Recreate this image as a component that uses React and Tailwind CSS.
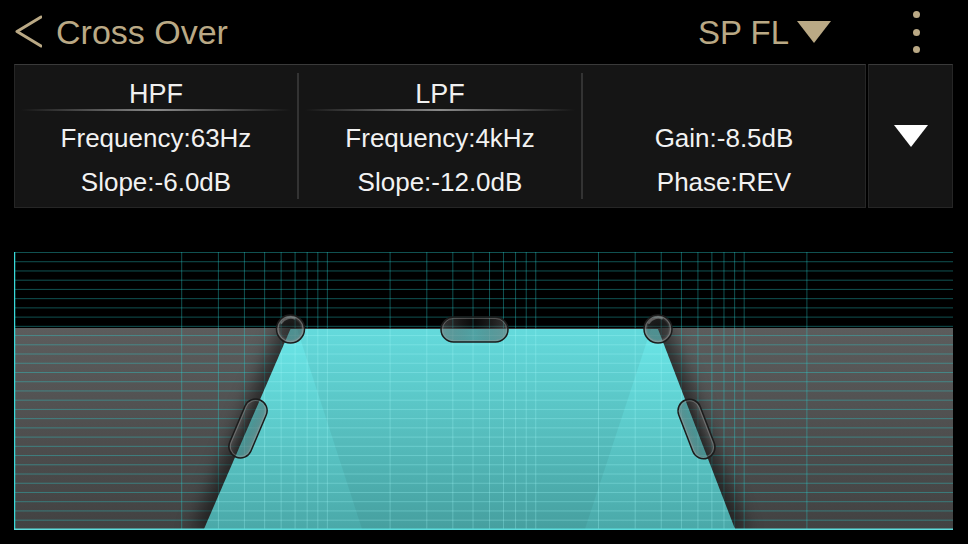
import React from "react";

const GOLD = "#baa985";

// log-frequency grid: x = 181.7 + 208.4 * log10(f / 20)
const freqs = [20, 30, 40, 50, 60, 70, 80, 90, 100, 200, 300, 400, 500, 600, 700, 800, 900,
  1000, 2000, 3000, 4000, 5000, 6000, 7000, 8000, 9000, 10000, 20000];
const xs = freqs.map((f) => 181.7 + 208.4 * Math.log10(f / 20));
const ys = Array.from({ length: 30 }, (_, i) => 252.5 + i * 9.23);

const trap = "290.5,329 658,329 735,529 204,529";

function Grid({ stroke, opacity }) {
  return (
    <g stroke={stroke} strokeOpacity={opacity} strokeWidth="1">
      {ys.map((y) => (<line key={"h" + y} x1="14" x2="953" y1={y} y2={y} />))}
      {xs.map((x) => (<line key={"v" + x} x1={x} x2={x} y1="252" y2="529" />))}
    </g>
  );
}

function Knob({ cx, cy }) {
  return (
    <g>
      <circle cx={cx} cy={cy} r="14" fill="url(#knob)" stroke="#1c1c1c" strokeWidth="1.5" />
      <circle cx={cx} cy={cy} r="12.5" fill="none" stroke="#a0a0a0" strokeOpacity="0.4" strokeWidth="1" />
      <path d={`M${cx - 9} ${cy - 6} A11 11 0 0 1 ${cx + 4} ${cy - 10.5}`} fill="none" stroke="#d8d8d8" strokeOpacity="0.3" strokeWidth="2" strokeLinecap="round" />
    </g>
  );
}

function Pill({ x, y, w, h, rot }) {
  return (
    <g transform={`translate(${x},${y}) rotate(${rot})`}>
      <rect x={-w / 2} y={-h / 2} width={w} height={h} rx={Math.min(w, h) / 2}
        fill="url(#pill)" stroke="#1c1c1c" strokeWidth="1.5" />
      <rect x={-w / 2 + 1.5} y={-h / 2 + 1.5} width={w - 3} height={h - 3} rx={Math.min(w, h) / 2 - 1.5}
        fill="none" stroke="#a0a0a0" strokeOpacity="0.4" strokeWidth="1" />
    </g>
  );
}

function Column({ title, line1, line2 }) {
  return (
    <div className="flex-1 flex flex-col">
      <div className="h-[44px] flex items-end justify-center pb-[1px] text-[27px] leading-none text-[#f0f0f0]">{title}</div>
      <div className={title ? "h-[2px] mx-[6px] bg-gradient-to-r from-transparent via-[#8a8a8a] to-transparent" : "h-[2px]"} />
      <div className="mt-[5px] h-[44px] flex items-center justify-center text-[26px] text-[#f2f2f2]">{line1}</div>
      <div className="h-[44px] flex items-center justify-center text-[26px] text-[#f2f2f2]">{line2}</div>
    </div>
  );
}

export default function App() {
  return (
    <div className="w-[968px] h-[544px] bg-black overflow-hidden font-['Liberation_Sans',Arial,sans-serif]">
      {/* header */}
      <div className="flex h-[64px] items-center pl-[14px] pr-[48px]">
        <svg width="28" height="34" viewBox="0 0 28 34">
          <path d="M27 2 L3 16.5 L27 31" fill="none" stroke={GOLD} strokeWidth="3" strokeLinecap="round" strokeLinejoin="round" />
        </svg>
        <span className="ml-[14px] text-[34px] leading-none" style={{ color: GOLD }}>Cross Over</span>
        <div className="flex-1" />
        <div className="flex items-center gap-[8px]">
          <span className="text-[33px] leading-none" style={{ color: GOLD }}>SP FL</span>
          <svg width="34" height="22" viewBox="0 0 34 22">
            <polygon points="0,0 34,0 17,22" fill={GOLD} />
          </svg>
        </div>
        <div className="ml-[82px] flex flex-col gap-[10.5px]">
          <div className="w-[7px] h-[7px] rounded-full" style={{ background: GOLD }} />
          <div className="w-[7px] h-[7px] rounded-full" style={{ background: GOLD }} />
          <div className="w-[7px] h-[7px] rounded-full" style={{ background: GOLD }} />
        </div>
      </div>

      {/* parameter panel */}
      <div className="flex gap-[2px] pl-[14px] h-[144px]">
        <div className="w-[852px] flex bg-[#151515] border border-[#262626] border-t-[#3a3a3a]">
          <Column title="HPF" line1="Frequency:63Hz" line2="Slope:-6.0dB" />
          <div className="w-[2px] my-[8px] bg-[#333333]" />
          <Column title="LPF" line1="Frequency:4kHz" line2="Slope:-12.0dB" />
          <div className="w-[2px] my-[8px] bg-[#333333]" />
          <Column title="" line1="Gain:-8.5dB" line2="Phase:REV" />
        </div>
        <div className="w-[85px] flex items-center justify-center bg-[#151515] border border-[#262626] border-t-[#3a3a3a]">
          <svg width="34" height="22" viewBox="0 0 34 22" className="mb-[1px]">
            <polygon points="0,0 34,0 17,22" fill="#ffffff" />
          </svg>
        </div>
      </div>

      {/* crossover graph */}
      <div className="mt-[44px] ml-[14px]">
        <svg width="939" height="278" viewBox="14 252 939 278" className="block">
          <defs>
            <linearGradient id="gray" x1="0" y1="0" x2="0" y2="1">
              <stop offset="0" stopColor="#5c5c5c" />
              <stop offset="1" stopColor="#424242" />
            </linearGradient>
            <linearGradient id="cyan" x1="0" y1="0" x2="0" y2="1">
              <stop offset="0" stopColor="#6ae6e8" />
              <stop offset="0.5" stopColor="#5ccaca" />
              <stop offset="1" stopColor="#4aa8a8" />
            </linearGradient>
            <radialGradient id="knob" cx="0.5" cy="0.5" r="0.5">
              <stop offset="0" stopColor="#2a2a2a" stopOpacity="0.45" />
              <stop offset="0.7" stopColor="#3a3a3a" stopOpacity="0.5" />
              <stop offset="1" stopColor="#888" stopOpacity="0.75" />
            </radialGradient>
            <linearGradient id="pill" x1="0" y1="0" x2="1" y2="0">
              <stop offset="0" stopColor="#666" stopOpacity="0.55" />
              <stop offset="0.5" stopColor="#222" stopOpacity="0.3" />
              <stop offset="1" stopColor="#666" stopOpacity="0.55" />
            </linearGradient>
            <filter id="blur" x="-20%" y="-20%" width="140%" height="140%">
              <feGaussianBlur stdDeviation="9" />
            </filter>
            <clipPath id="trapClip"><polygon points={trap} /></clipPath>
            <clipPath id="grayClip"><rect x="14" y="328" width="939" height="201" /></clipPath>
          </defs>

          <rect x="14" y="252" width="939" height="278" fill="#000" />
          <rect x="14" y="328" width="939" height="201" fill="url(#gray)" />
          <Grid stroke="#2ad4d4" opacity="0.38" />

          <g clipPath="url(#grayClip)">
            <polygon points="282,322 666,322 748,535 190,535" fill="#000" opacity="0.5" filter="url(#blur)" />
          </g>

          <polygon points={trap} fill="url(#cyan)" />
          <polygon points="297,329 651,329 585,529 362,529" fill="#000" opacity="0.05" />
          <g clipPath="url(#trapClip)">
            <Grid stroke="#a8ffff" opacity="0.28" />
          </g>

          <line x1="14.5" x2="14.5" y1="252" y2="529" stroke="#38d8d8" strokeWidth="1.5" />
          <line x1="14" x2="953" y1="529.3" y2="529.3" stroke="#5edcdc" strokeWidth="1.4" />

          <Knob cx={290.5} cy={329} />
          <Knob cx={658} cy={329} />
          <Pill x={474.5} y={329.5} w={67} h={25} rot={0} />
          <Pill x={248} y={428.5} w={23} h={62} rot={23} />
          <Pill x={696.5} y={429} w={23} h={62} rot={-21} />
        </svg>
      </div>
    </div>
  );
}
